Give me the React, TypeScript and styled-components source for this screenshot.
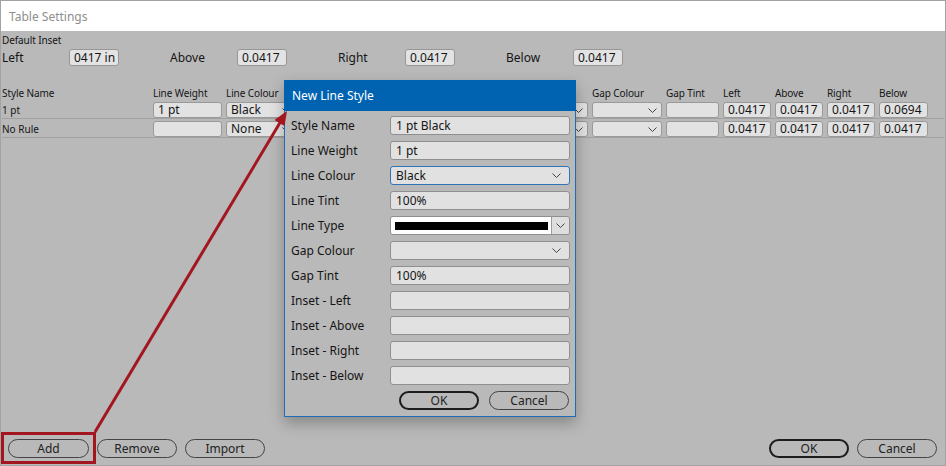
import { Fragment } from 'react'
import styled, { createGlobalStyle, css } from 'styled-components'

const GlobalStyle = createGlobalStyle`
  html, body {
    margin: 0;
    padding: 0;
    background: #ffffff;
  }
  * {
    box-sizing: border-box;
  }
`

const FONT = `"Noto Sans", "Open Sans", "Liberation Sans", sans-serif`

const Window = styled.div`
  position: relative;
  width: 946px;
  height: 466px;
  border: 1px solid #a3a3a3;
  display: flex;
  flex-direction: column;
  font-family: ${FONT};
  color: #151515;
  overflow: hidden;
`

const TitleBar = styled.div`
  height: 30px;
  flex: none;
  background: #ffffff;
  color: #8e8e8e;
  font-size: 12px;
  display: flex;
  align-items: center;
  padding-left: 8px;
`

const Body = styled.div`
  flex: 1;
  background: #b9b9b9;
  display: flex;
  flex-direction: column;
  padding: 0 1px;
`

const SmallLabel = styled.div`
  font-size: 10px;
  line-height: 12px;
  margin-top: 3px;
  letter-spacing: -0.1px;
`

const InsetRow = styled.div`
  display: flex;
  align-items: center;
  height: 17px;
  margin-top: 3px;
`

const InsetLabel = styled.span`
  width: 67px;
  font-size: 12px;
`

const InsetField = styled.div`
  width: 50px;
  height: 17px;
  margin-right: 51px;
  background: #e3e3e3;
  border: 1px solid #979797;
  border-radius: 3px;
  font-size: 12px;
  line-height: 15px;
  padding: 0 4px;
  white-space: nowrap;
  overflow: hidden;
`

const columns = css`
  display: grid;
  grid-template-columns: 147px 69px 70px 55px 229px 70px 53px 48px 48px 48px 49px;
  column-gap: 4px;
  align-items: center;
`

const HeaderRow = styled.div`
  ${columns};
  height: 14px;
  margin-top: 20px;
  font-size: 10px;
  line-height: 14px;
  letter-spacing: -0.1px;
`

const DataRow = styled.div`
  ${columns};
  height: 19px;
  padding-top: 2px;
  border-bottom: 1px solid #a1a1a1;
  font-size: 10px;
  align-items: start;

  & > span {
    line-height: 16px;
  }
`

const Cell = styled.div`
  height: 16px;
  background: #e2e2e2;
  border: 1px solid #999999;
  border-radius: 3px;
  font-size: 12px;
  line-height: 14px;
  padding: 0 4px;
  white-space: nowrap;
  overflow: hidden;
  display: flex;
  align-items: center;
`

const ChevronBox = styled.span`
  margin-left: auto;
  display: flex;
  align-items: center;
`

const Chevron = () => (
  <svg width='9' height='5' viewBox='0 0 9 5'>
    <polyline points='0.5,0.5 4.5,4.5 8.5,0.5' fill='none' stroke='#444' strokeWidth='1' />
  </svg>
)

const Footer = styled.div`
  margin-top: auto;
  margin-bottom: 7px;
  display: flex;
  justify-content: space-between;
  padding: 0 7px 0 6px;
`

const ButtonGroup = styled.div`
  display: flex;
  gap: 8px;
`

const Button = styled.button<{ $primary?: boolean; $w?: number }>`
  width: ${(p) => p.$w ?? 80}px;
  height: 19px;
  border-radius: 10px;
  border: ${(p) => (p.$primary ? '2px solid #1d1d1d' : '1px solid #444')};
  background: transparent;
  font-family: ${FONT};
  font-size: 12px;
  line-height: 14px;
  color: #222;
  padding: 0;
`

/* dialog */

const Dialog = styled.div`
  position: absolute;
  left: 283px;
  top: 79px;
  width: 292px;
  height: 337px;
  background: #b9b9b9;
  border: 1px solid #1f6cb5;
  box-shadow: 0 6px 14px rgba(0, 0, 0, 0.28);
  display: flex;
  flex-direction: column;
`

const DialogTitle = styled.div`
  height: 31px;
  background: #0063b1;
  color: #ffffff;
  font-size: 12px;
  display: flex;
  align-items: center;
  padding-left: 8px;
  margin: -1px -1px 0;
`

const Form = styled.div`
  display: grid;
  grid-template-columns: 99px 180px;
  grid-auto-rows: 19px;
  row-gap: 6px;
  padding: 5px 0 0 6px;
  align-items: center;
`

const FormLabel = styled.span`
  font-size: 12px;
`

const Field = styled.div<{ $focus?: boolean }>`
  height: 19px;
  background: #e1e1e1;
  border: 1px solid ${(p) => (p.$focus ? '#2f73b8' : '#8f8f8f')};
  border-radius: 3px;
  font-size: 12px;
  padding: 0 8px 0 5px;
  display: flex;
  align-items: center;
`

const LineTypeField = styled.div`
  height: 19px;
  display: flex;
  border: 1px solid #8f8f8f;
  border-radius: 3px;
  overflow: hidden;
`

const LineTypePreview = styled.div`
  flex: 1;
  background: #ffffff;
  display: flex;
  align-items: center;
  padding: 0 3px 0 4px;
`

const BlackLine = styled.div`
  height: 8px;
  width: 100%;
  background: #000;
`

const LineTypeArrow = styled.div`
  width: 18px;
  background: #dedede;
  border-left: 1px solid #9a9a9a;
  display: flex;
  align-items: center;
  justify-content: center;
`

const DialogButtons = styled.div`
  display: flex;
  justify-content: flex-end;
  gap: 10px;
  padding: 6px 6px 0 0;
`

/* annotation */

const Highlight = styled.div`
  position: absolute;
  left: 0;
  top: 431px;
  width: 95px;
  height: 32px;
  border: 3px solid #a3161f;
`

const Overlay = styled.svg`
  position: absolute;
  left: -1px;
  top: -1px;
  pointer-events: none;
`

// Line Tint / Line Type columns sit under the dialog, so their labels are left out
const headers = [
  'Style Name',
  'Line Weight',
  'Line Colour',
  '',
  '',
  'Gap Colour',
  'Gap Tint',
  'Left',
  'Above',
  'Right',
  'Below',
]

const rows = [
  { name: '1 pt', weight: '1 pt', colour: 'Black', insets: ['0.0417', '0.0417', '0.0417', '0.0694'] },
  { name: 'No Rule', weight: '', colour: 'None', insets: ['0.0417', '0.0417', '0.0417', '0.0417'] },
]

const insets = [
  { label: 'Left', value: '0417 in' },
  { label: 'Above', value: '0.0417' },
  { label: 'Right', value: '0.0417' },
  { label: 'Below', value: '0.0417' },
]

const formRows = [
  { label: 'Style Name', value: '1 pt Black' },
  { label: 'Line Weight', value: '1 pt' },
  { label: 'Line Colour', value: 'Black', select: true, focus: true },
  { label: 'Line Tint', value: '100%' },
  { label: 'Line Type', lineType: true },
  { label: 'Gap Colour', value: '', select: true },
  { label: 'Gap Tint', value: '100%' },
  { label: 'Inset - Left', value: '' },
  { label: 'Inset - Above', value: '' },
  { label: 'Inset - Right', value: '' },
  { label: 'Inset - Below', value: '' },
]

const App = () => {
  return (
    <>
      <GlobalStyle />
      <Window>
        <TitleBar>Table Settings</TitleBar>
        <Body>
          <SmallLabel>Default Inset</SmallLabel>
          <InsetRow>
            {insets.map((i) => (
              <Fragment key={i.label}>
                <InsetLabel>{i.label}</InsetLabel>
                <InsetField>{i.value}</InsetField>
              </Fragment>
            ))}
          </InsetRow>

          <HeaderRow>
            {headers.map((h, i) => (
              <span key={i}>{h}</span>
            ))}
          </HeaderRow>
          {rows.map((r) => (
            <DataRow key={r.name}>
              <span>{r.name}</span>
              <Cell>{r.weight}</Cell>
              <Cell>
                {r.colour}
                <ChevronBox>
                  <Chevron />
                </ChevronBox>
              </Cell>
              <Cell />
              <Cell>
                <ChevronBox>
                  <Chevron />
                </ChevronBox>
              </Cell>
              <Cell>
                <ChevronBox>
                  <Chevron />
                </ChevronBox>
              </Cell>
              <Cell />
              {r.insets.map((v, i) => (
                <Cell key={i}>{v}</Cell>
              ))}
            </DataRow>
          ))}

          <Footer>
            <ButtonGroup>
              <Button $w={81}>Add</Button>
              <Button>Remove</Button>
              <Button>Import</Button>
            </ButtonGroup>
            <ButtonGroup>
              <Button $primary>OK</Button>
              <Button>Cancel</Button>
            </ButtonGroup>
          </Footer>
        </Body>

        <Dialog>
          <DialogTitle>New Line Style</DialogTitle>
          <Form>
            {formRows.map((f) => (
              <Fragment key={f.label}>
                <FormLabel>{f.label}</FormLabel>
                {f.lineType ? (
                  <LineTypeField>
                    <LineTypePreview>
                      <BlackLine />
                    </LineTypePreview>
                    <LineTypeArrow>
                      <Chevron />
                    </LineTypeArrow>
                  </LineTypeField>
                ) : (
                  <Field $focus={f.focus}>
                    {f.value}
                    {f.select && (
                      <ChevronBox>
                        <Chevron />
                      </ChevronBox>
                    )}
                  </Field>
                )}
              </Fragment>
            ))}
          </Form>
          <DialogButtons>
            <Button $primary>OK</Button>
            <Button>Cancel</Button>
          </DialogButtons>
        </Dialog>

        <Highlight />
        <Overlay width='946' height='466' viewBox='0 0 946 466'>
          <line x1='95' y1='432' x2='281' y2='121' stroke='#a3161f' strokeWidth='3' />
          <polygon points='287,111 284.5,126 274.5,120' fill='#a3161f' />
        </Overlay>
      </Window>
    </>
  )
}

export default App
